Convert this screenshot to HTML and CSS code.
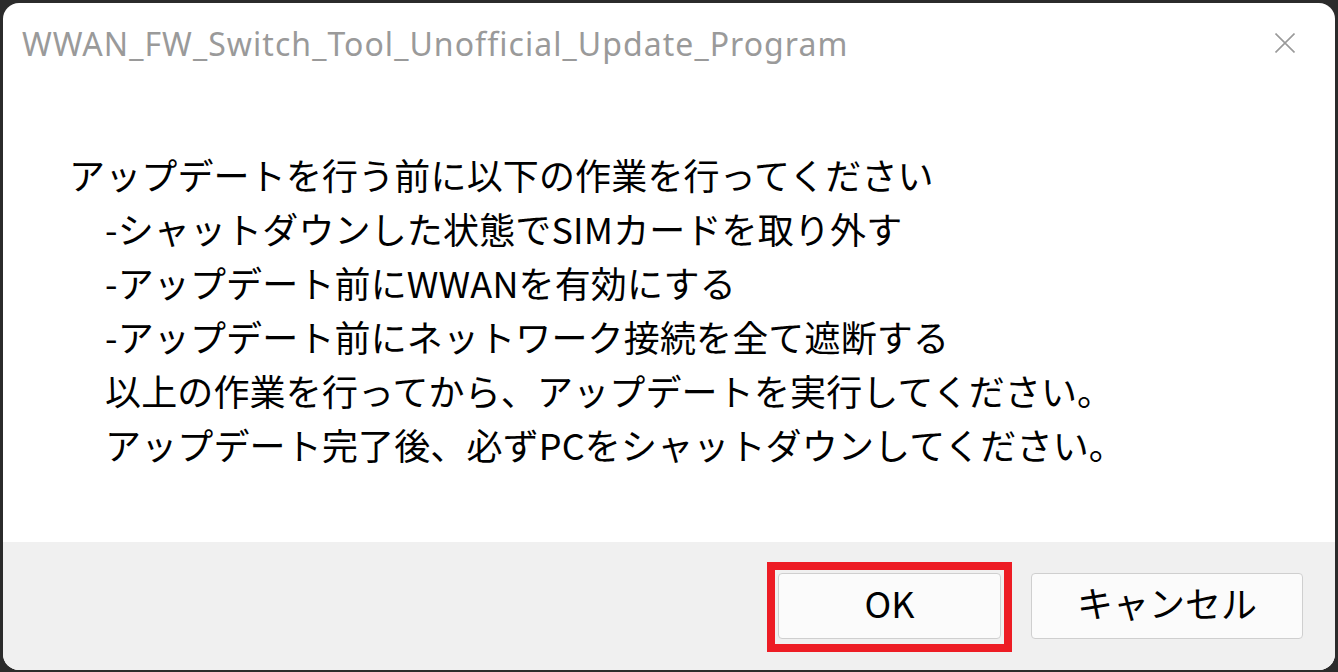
FILE: index.html
```html
<!DOCTYPE html>
<html lang="ja">
<head>
<meta charset="utf-8">
<title>WWAN_FW_Switch_Tool_Unofficial_Update_Program</title>
<link rel="stylesheet" href="styles.css">
</head>
<body>
<div class="dialog">
  <div class="titlebar">
    <div class="title">WWAN_FW_Switch_Tool_Unofficial_Update_Program</div>
    <div class="close">
      <svg width="20" height="20" viewBox="0 0 20 20"><path d="M0.5 0.5 L19.5 19.5 M19.5 0.5 L0.5 19.5" stroke="#9a9a9a" stroke-width="1.6" fill="none"/></svg>
    </div>
  </div>
  <div class="content">
    <p class="line">アップデートを行う前に以下の作業を行ってください</p>
    <p class="line indent">-シャットダウンした状態でSIMカードを取り外す</p>
    <p class="line indent">-アップデート前にWWANを有効にする</p>
    <p class="line indent">-アップデート前にネットワーク接続を全て遮断する</p>
    <p class="line indent">以上の作業を行ってから、アップデートを実行してください。</p>
    <p class="line indent">アップデート完了後、必ずPCをシャットダウンしてください。</p>
  </div>
  <div class="footer">
    <span class="highlight"><button class="btn btn-ok">OK</button></span>
    <button class="btn btn-cancel">キャンセル</button>
  </div>
</div>
</body>
</html>
```
FILE: styles.css
```css
html, body {
  margin: 0;
  padding: 0;
  background: #2b2b2b;
  width: 1338px;
  height: 672px;
  overflow: hidden;
}
.dialog {
  margin: 3px;
  width: 1332px;
  height: 667px;
  border-radius: 16px;
  overflow: hidden;
  background: #ffffff;
  display: flex;
  flex-direction: column;
}
.titlebar {
  height: 88px;
  flex: none;
  display: flex;
  align-items: flex-start;
  justify-content: space-between;
  padding: 0 40px 0 19px;
  box-sizing: border-box;
}
.title {
  font-family: "Noto Sans", sans-serif;
  font-size: 32px;
  line-height: 32px;
  letter-spacing: 1.05px;
  color: #9a9a9a;
  padding-top: 25px;
}
.close {
  padding-top: 30px;
  width: 20px;
  height: 20px;
}
.close svg { display: block; }
.content {
  flex: 1;
  padding: 56px 0 0 66px;
  font-family: "Noto Sans CJK JP", "Noto Sans", sans-serif;
  font-size: 36px;
  line-height: 54px;
  letter-spacing: 0.15px;
  color: #000;
}
.line { margin: 0; white-space: nowrap; }
.indent { padding-left: 36px; }
.footer {
  height: 128px;
  flex: none;
  background: #f0f0f0;
  display: flex;
  align-items: center;
  justify-content: flex-end;
  gap: 19px;
  padding-right: 32px;
  box-sizing: border-box;
}
.highlight {
  display: inline-flex;
  border: 8px solid #ed1c24;
  padding: 3px 3px 5px 3px;
  margin-top: 2px;
}
.btn {
  height: 66px;
  margin: 0;
  background: #fbfbfb;
  border: 1px solid #cfcfcf;
  border-radius: 4px;
  font-family: "Noto Sans CJK JP", "Noto Sans", sans-serif;
  font-size: 36px;
  color: #000;
  padding: 0 0 8px 0;
  line-height: 1;
}
.btn-ok { width: 223px; }
.btn-cancel { width: 272px; }
```
